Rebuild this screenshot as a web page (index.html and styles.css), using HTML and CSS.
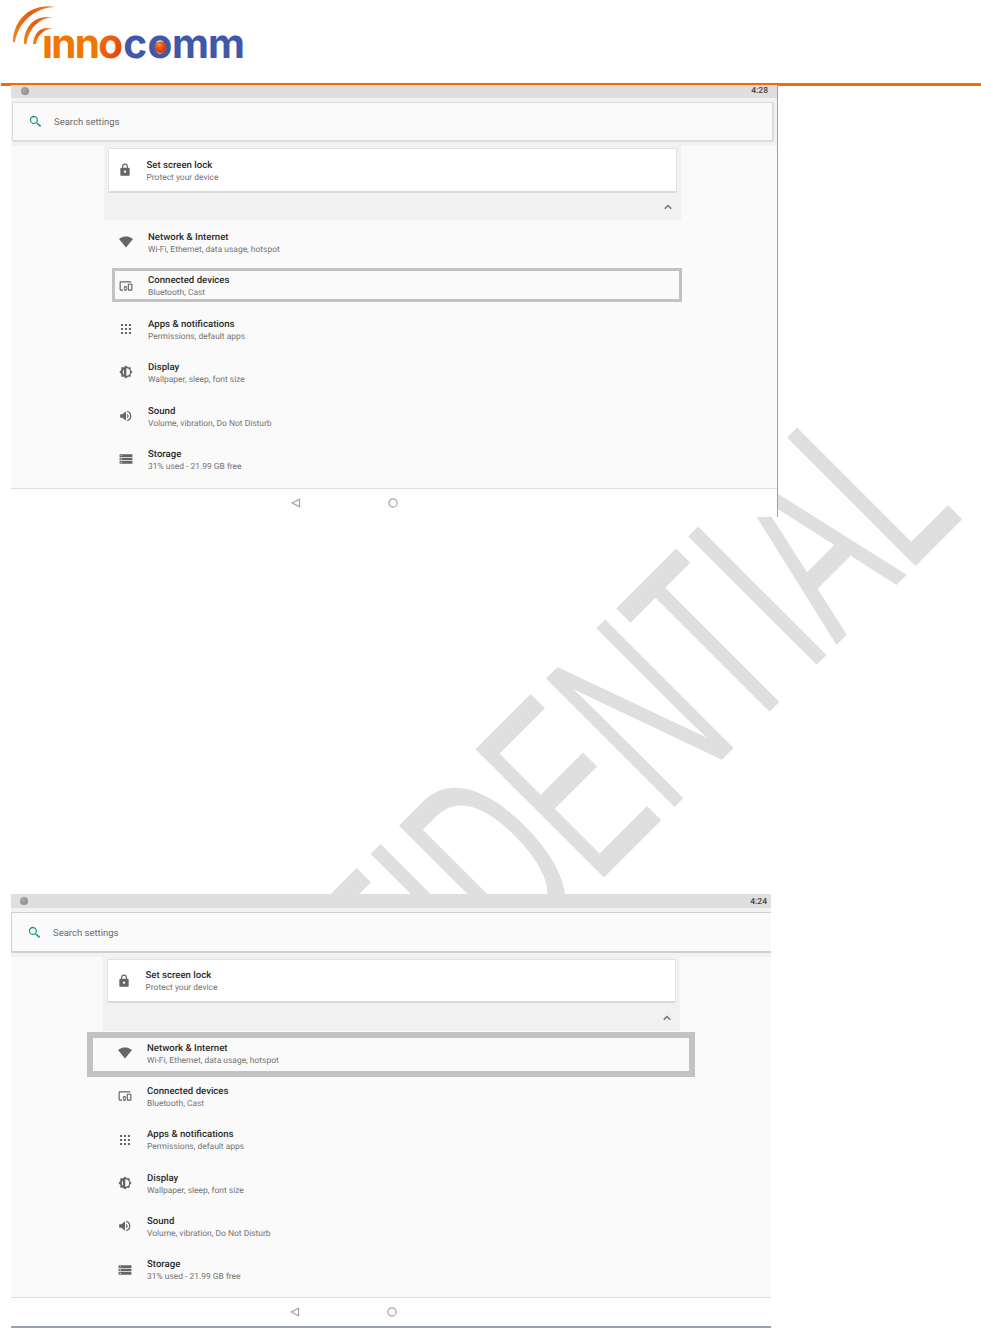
FILE: index.html
```html
<!DOCTYPE html>
<html lang="en">
<head>
<meta charset="utf-8">
<title>Settings guide</title>
<link rel="stylesheet" href="styles.css">
</head>
<body>
<svg class="defs" width="0" height="0" aria-hidden="true">
  <symbol id="search" viewBox="0 0 24 24"><path d="M15.500 14h-.8l-.3-.3A6.500 6.500 0 1 0 13.700 14.400l.3.3v.8l5.200 5.200 1.900-1.900zM9.500 14a4.500 4.500 0 1 1 0-9 4.500 4.500 0 0 1 0 9z"/></symbol>
  <symbol id="lock" viewBox="0 0 24 24"><path fill-rule="evenodd" d="M18 8h-1V6A5 5 0 0 0 7 6v2H6a2 2 0 0 0-2 2v10a2 2 0 0 0 2 2h12a2 2 0 0 0 2-2V10a2 2 0 0 0-2-2zm-6 9a2 2 0 1 1 0-4 2 2 0 0 1 0 4zm3.100-9H8.900V6a3.100 3.100 0 0 1 6.200 0z"/></symbol>
  <symbol id="wifi" viewBox="0 0 24 24"><path d="M12 21.500L24 7C23.200 6.300 18.700 2.500 12 2.500S.8 6.300 0 7z"/></symbol>
  <symbol id="devices" viewBox="0 0 24 24"><path d="M3 6h18V4H3a2 2 0 0 0-2 2v12a2 2 0 0 0 2 2h4v-2H3zm10 6H9v1.800a3 3 0 0 0 0 4.400V20h4v-1.800a3 3 0 0 0 0-4.400zm-2 5.500a1.500 1.500 0 1 1 0-3 1.500 1.500 0 0 1 0 3zM22 8h-6a1 1 0 0 0-1 1v10a1 1 0 0 0 1 1h6a1 1 0 0 0 1-1V9a1 1 0 0 0-1-1zm-1 10h-4v-8h4z"/></symbol>
  <symbol id="apps" viewBox="0 0 24 24"><path d="M3.500 3.500H7V7H3.500zM10.250 3.500h3.500V7h-3.500zM17 3.500h3.500V7H17zM3.500 10.250H7v3.500H3.500zM10.250 10.250h3.500v3.500h-3.500zM17 10.250h3.500v3.500H17zM3.500 17H7v3.500H3.500zM10.250 17h3.500v3.500h-3.500zM17 17h3.500v3.500H17z"/></symbol>
  <symbol id="display" viewBox="0 0 24 24"><path fill-rule="evenodd" d="M20 15.300L23.300 12 20 8.700V4h-4.700L12 .7 8.700 4H4v4.700L.7 12 4 15.300V20h4.700l3.300 3.300 3.300-3.300H20zM12.500 18.500v-13a6.500 6.500 0 0 1 0 13zM8.500 7.500v9a6.500 6.500 0 0 1 0-9z"/></symbol>
  <symbol id="sound" viewBox="0 0 24 24"><path d="M2 9v6h4l6 5V4L6 9zm14.500 3A4.500 4.500 0 0 0 14 8v8a4.500 4.500 0 0 0 2.500-4zM14 3.200v2.100a7 7 0 0 1 0 13.400v2.100a9 9 0 0 0 0-17.600z"/></symbol>
  <symbol id="storage" viewBox="0 0 24 24"><path fill-rule="evenodd" d="M1 20h22v-4.500H1zm2-3h2v1.700H3zM1 4v4.500h22V4zm4 3H3V5.400h2zM1 14.200h22V9.800H1zm2-3.100h2v1.800H3z"/></symbol>
  <symbol id="chevron" viewBox="0 0 24 24"><path d="M12 7.500l-6.500 6.500 1.900 1.900 4.600-4.600 4.600 4.600L18.500 14z"/></symbol>
</svg>

<svg class="watermark" viewBox="0 0 981 1328"><text transform="translate(189.500 1292) rotate(-45) scale(.567 1)">CONFIDENTIAL</text></svg>

<header class="masthead">
  <svg class="logo" viewBox="0 0 260 70" width="260" height="70">
    <defs>
      <linearGradient id="arc" x1="0" y1="1" x2="1" y2="0"><stop offset="0" stop-color="#f08a1c"/><stop offset=".6" stop-color="#e8590c"/><stop offset="1" stop-color="#ee8a30"/></linearGradient>
      <linearGradient id="ring" x1="0" y1="0" x2="1" y2="1"><stop offset="0" stop-color="#f47a00"/><stop offset=".5" stop-color="#f05a10"/><stop offset="1" stop-color="#d63c00"/></linearGradient>
      <radialGradient id="ball" cx=".4" cy=".3"><stop offset="0" stop-color="#ff9a50"/><stop offset=".5" stop-color="#ee5a10"/><stop offset="1" stop-color="#d04408"/></radialGradient>
    </defs>
    <g fill="url(#arc)">
      <path d="M13 42C13 21 30 2.500 55.500 7 34 7.500 18 23 15 42z"/>
      <path d="M24 44C23.500 28 34 14 52.500 17.500 37 18.500 28.500 30 26.500 44z"/>
      <path d="M33 44C33.500 34 40 25.500 52 28.500 43 29.500 37.500 36 36 44z"/>
    </g>
    <text class="logo-text logo-warm" x="42 51.300 74.800" y="58">ınn</text>
    <text class="logo-text" fill="url(#ring)" x="98.300" y="58">o</text>
    <text class="logo-text logo-cool" x="123.300 147.500 172 208" y="58">comm</text>
    <circle cx="160.500" cy="47.300" r="6" fill="url(#ball)"/>
  </svg>
</header>

<main>
  <section class="panel panel-a">
    <div class="status"><span class="dot"></span><time>4:28</time></div>
    <div class="search-area"><div class="search"><svg class="ico-search"><use href="#search"/></svg><span>Search settings</span></div></div>
    <div class="content">
      <div class="suggest">
        <div class="card"><svg class="ico"><use href="#lock"/></svg><div class="label"><b>Set screen lock</b><span>Protect your device</span></div></div>
        <svg class="chev"><use href="#chevron"/></svg>
      </div>
      <div class="rows">
        <div class="row"><svg class="ico"><use href="#wifi"/></svg><div class="label"><b>Network &amp; Internet</b><span>Wi-Fi, Ethernet, data usage, hotspot</span></div></div>
        <div class="row marked"><svg class="ico"><use href="#devices"/></svg><div class="label"><b>Connected devices</b><span>Bluetooth, Cast</span></div></div>
        <div class="row"><svg class="ico"><use href="#apps"/></svg><div class="label"><b>Apps &amp; notifications</b><span>Permissions, default apps</span></div></div>
        <div class="row"><svg class="ico"><use href="#display"/></svg><div class="label"><b>Display</b><span>Wallpaper, sleep, font size</span></div></div>
        <div class="row"><svg class="ico"><use href="#sound"/></svg><div class="label"><b>Sound</b><span>Volume, vibration, Do Not Disturb</span></div></div>
        <div class="row"><svg class="ico"><use href="#storage"/></svg><div class="label"><b>Storage</b><span>31% used - 21.99 GB free</span></div></div>
      </div>
    </div>
    <div class="nav"><svg viewBox="0 0 10 10"><path d="M1.200 5L8.500 1.200v7.600z"/></svg><svg viewBox="0 0 10 10"><circle cx="5" cy="5" r="4.100"/></svg></div>
  </section>

  <section class="panel panel-b">
    <div class="status"><span class="dot"></span><time>4:24</time></div>
    <div class="search-area"><div class="search"><svg class="ico-search"><use href="#search"/></svg><span>Search settings</span></div></div>
    <div class="content">
      <div class="suggest">
        <div class="card"><svg class="ico"><use href="#lock"/></svg><div class="label"><b>Set screen lock</b><span>Protect your device</span></div></div>
        <svg class="chev"><use href="#chevron"/></svg>
      </div>
      <div class="rows">
        <div class="row marked"><svg class="ico"><use href="#wifi"/></svg><div class="label"><b>Network &amp; Internet</b><span>Wi-Fi, Ethernet, data usage, hotspot</span></div></div>
        <div class="row"><svg class="ico"><use href="#devices"/></svg><div class="label"><b>Connected devices</b><span>Bluetooth, Cast</span></div></div>
        <div class="row"><svg class="ico"><use href="#apps"/></svg><div class="label"><b>Apps &amp; notifications</b><span>Permissions, default apps</span></div></div>
        <div class="row"><svg class="ico"><use href="#display"/></svg><div class="label"><b>Display</b><span>Wallpaper, sleep, font size</span></div></div>
        <div class="row"><svg class="ico"><use href="#sound"/></svg><div class="label"><b>Sound</b><span>Volume, vibration, Do Not Disturb</span></div></div>
        <div class="row"><svg class="ico"><use href="#storage"/></svg><div class="label"><b>Storage</b><span>31% used - 21.99 GB free</span></div></div>
      </div>
    </div>
    <div class="nav"><svg viewBox="0 0 10 10"><path d="M1.200 5L8.500 1.200v7.600z"/></svg><svg viewBox="0 0 10 10"><circle cx="5" cy="5" r="4.100"/></svg></div>
  </section>
</main>
</body>
</html>
```

FILE: styles.css
```css
*, *::before { box-sizing: border-box; }
body { margin: 0; width: 981px; height: 1328px; overflow: hidden; background: #fff; font-family: Roboto, "Liberation Sans", sans-serif; position: relative; text-rendering: geometricPrecision; }
svg { display: block; flex: none; }
.defs { position: absolute; }
.watermark { position: absolute; inset: 0; width: 981px; height: 1328px; }
.watermark text { font: 264px "Liberation Sans", Arial, sans-serif; fill: #dfdfdf; }

.masthead { height: 86px; margin-left: 1px; border-bottom: 3px solid #ff6600; }
.logo { margin-left: -1px; }
.logo-text { font: 700 40.500px Inter, sans-serif; }
.logo-warm { fill: #f07800; }
.logo-cool { fill: #4158a8; }

main { position: relative; }
.panel { margin-left: 11px; background: #fafafa; display: flex; flex-direction: column; overflow: hidden; }
.panel-a { width: 767px; height: 432px; margin-top: -1px; border-right: 1px solid #98a2ac; }
.panel-b { width: 760px; height: 434px; margin-top: 377px; border-bottom: 2px solid #98a2ae; }

.status { height: 13px; flex: none; background: #dfdfdf; display: flex; justify-content: space-between; align-items: center; padding: 0 9px 2px 10px; font-size: 8.500px; line-height: 10px; color: #444; font-weight: 500; }
.panel-b .status { height: 14px; padding: 0 4px 0 9px; }
.panel-b time { padding-top: 1px; }
.dot { width: 8px; height: 8px; border-radius: 50%; background: radial-gradient(circle at 35% 35%, #aaa, #858585); }

.search-area { flex: none; height: 48px; background: #f2f2f2; padding: 4px 3px 4px 1px; }
.panel-b .search-area { padding: 4px 0 4px 0; height: 49px; }
.search { height: 40px; background: #fafafa; border: 1px solid #dcdcdc; border-width: 1px 2px 2px 1px; border-radius: 2px; display: flex; align-items: center; padding-left: 15px; font-size: 9.500px; color: #6c6c6c; }
.search span { padding-top: 2px; }
.panel-b .search { height: 41px; border-color: #d0d0d0; border-right: 0; border-radius: 2px 0 0 2px; }
.ico-search { width: 15px; height: 15px; fill: #17967f; margin-right: 11px; }

.content { flex: 1; }
.suggest { margin-left: 93px; width: 577px; height: 74px; background: #f1f1f1; padding: 2px 0 0 4px; }
.panel-b .suggest { margin-left: 92px; }
.card { width: 569px; height: 45px; background: #fff; border: 1px solid #e2e2e2; border-bottom: 2px solid #dadada; border-radius: 2px; display: flex; align-items: center; padding-left: 9px; }
.panel-b .card { height: 44px; }
.card .ico { width: 14px; height: 14px; margin-right: 14.500px; }
.chev { width: 14px; height: 14px; margin: 7px 0 0 553px; fill: #757575; }
.panel-b .chev { margin-top: 8px; }
.ico { width: 16px; height: 14px; fill: #656565; }
.label { display: flex; flex-direction: column; padding-top: 2px; font-size: 8.450px; line-height: 12px; color: #747474; white-space: nowrap; }
.label b { font-size: 9.600px; line-height: 13px; font-weight: 500; color: #2b2b2b; }
.rows { padding: .8px 0 0 107px; }
.panel-b .rows { padding: .7px 0 0 106px; }
.row { position: relative; height: 43.400px; display: flex; align-items: center; }
.panel-b .row { height: 43.300px; }
.row .ico { margin: 0 14px .5px 0; }
.marked::before { content: ""; position: absolute; border: 3px solid #c2c2c2; left: -6px; top: 3.700px; width: 570px; height: 34px; }
.panel-b .marked::before { border-width: 6px; left: -30px; top: .3px; width: 608px; height: 45px; }

.nav { flex: none; height: 29px; background: #fefefe; border-top: 1px solid #dedede; display: flex; gap: 87px; align-items: center; padding-left: 280px; }
.nav svg { width: 10px; height: 10px; fill: none; stroke: #a2a2a2; stroke-width: 1.200; }
.panel-b .nav { padding-left: 279px; }
```
